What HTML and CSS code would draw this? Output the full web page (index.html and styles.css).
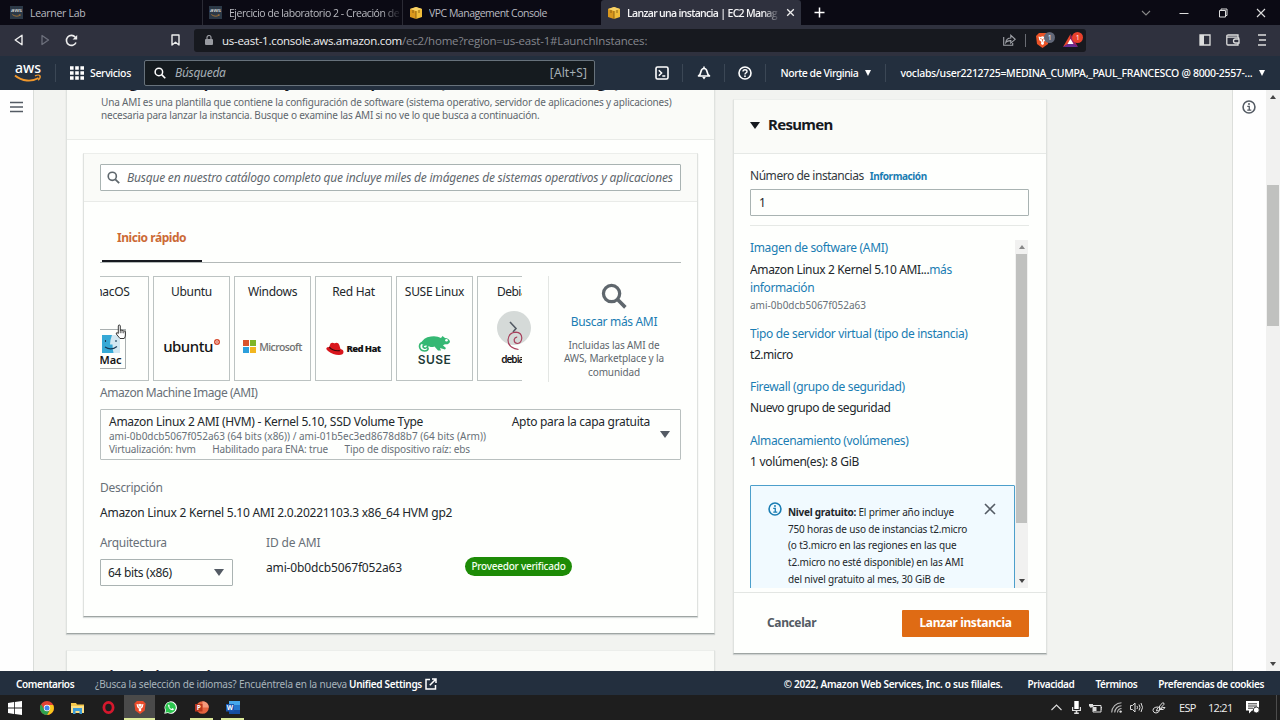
FILE: index.html
```
<!DOCTYPE html>
<html lang="es">
	<head>
		<meta charset="utf-8">
		<title>Lanzar una instancia | EC2 Management Console</title>
		<link rel="stylesheet" href="styles.css">
	</head>

	<body>
		<svg class="defs" width="0" height="0">
			<symbol id="cube" viewBox="0 0 14 14">
				<path d="M1 3 7 1v12l-6-2z" fill="#d9971d"/>
				<path d="M7 1l6 2v8l-6 2z" fill="#f0bd3a"/>
				<path d="M1 3l6-2 6 2-6 2z" fill="#f7d267"/>
				<path d="M7 5v8M4 4v3M10 4v3" stroke="#7c5310" stroke-width=".8"/>
			</symbol>
			<symbol id="smile" viewBox="0 0 28 9">
				<path d="M1 1.500c7 6 17 6.500 23.500 2.500" fill="none" stroke="#f0982c" stroke-width="1.800"/>
				<path d="M21 1.800c2-.9 4.500-.9 5 0 .4.900-.3 3-1.800 4.400" fill="none" stroke="#f0982c" stroke-width="1.400"/>
			</symbol>
			<symbol id="search" viewBox="0 0 16 16">
				<circle cx="6.500" cy="6.500" r="5" fill="none" stroke="currentColor" stroke-width="2"/>
				<path d="M10.200 10.200 15 15" stroke="currentColor" stroke-width="2.200"/>
			</symbol>
			<symbol id="info" viewBox="0 0 16 16">
				<circle cx="8" cy="8" r="6.800" fill="none" stroke="currentColor" stroke-width="1.800"/>
				<path d="M6 7.300h2.300v4M6 11.600h4.600" fill="none" stroke="currentColor" stroke-width="1.500"/>
				<circle cx="8" cy="4.600" r="1.100" fill="currentColor"/>
			</symbol>
		</svg>

		<div class="tabs">
			<div class="tab"><span class="fav"><i>aws</i><svg width="9" height="3"><use href="#smile"/></svg></span><span class="tab-text">Learner Lab</span></div>
			<div class="tab"><span class="fav"><i>aws</i><svg width="9" height="3"><use href="#smile"/></svg></span><span class="tab-text">Ejercicio de laboratorio 2 - Creación de</span></div>
			<div class="tab"><svg class="fav-cube" width="14" height="14"><use href="#cube"/></svg><span class="tab-text">VPC Management Console</span></div>
			<div class="tab on"><svg class="fav-cube" width="14" height="14"><use href="#cube"/></svg><span class="tab-text">Lanzar una instancia | EC2 Manag</span>
				<svg class="tab-close" width="9" height="9" viewBox="0 0 9 9"><path d="M1.200 1.200l6.600 6.600M7.800 1.200 1.200 7.800" stroke="#eee" stroke-width="1.300"/></svg>
			</div>
			<svg class="tab-new" width="11" height="11" viewBox="0 0 11 11"><path d="M5.500 .5v10M.5 5.500h10" stroke="#fff" stroke-width="1.500"/></svg>
			<div class="win">
				<svg width="10" height="10" viewBox="0 0 10 10"><path d="M1 3l4 4 4-4" fill="none" stroke="#888" stroke-width="1.100"/></svg>
				<svg width="10" height="10" viewBox="0 0 10 10"><path d="M.5 5.500h9" stroke="#ddd"/></svg>
				<svg width="10" height="10" viewBox="0 0 10 10"><path d="M1.500 2.500h6v6.500h-6zM3 2.500v-1.500h6v6.500H7.500" fill="none" stroke="#ddd"/></svg>
				<svg width="10" height="10" viewBox="0 0 10 10"><path d="M1 1l8 8M9 1 1 9" stroke="#ddd" stroke-width="1.100"/></svg>
			</div>
		</div>

		<div class="toolbar">
			<div class="nav-btns">
				<svg width="12" height="12" viewBox="0 0 12 12"><path d="M9 1.200v9.600L2.200 6z" fill="none" stroke="#eee" stroke-width="1.400" stroke-linejoin="round"/></svg>
				<svg width="12" height="12" viewBox="0 0 12 12"><path d="M3 1.500v9L9.500 6z" fill="none" stroke="#6c6f7b" stroke-width="1.300" stroke-linejoin="round"/></svg>
				<svg width="13" height="13" viewBox="0 0 13 13"><path d="M11 8.500A5 5 0 1 1 10.300 3.200" fill="none" stroke="#eee" stroke-width="1.600"/><path d="M12.200 1v4.600H7.600z" fill="#eee"/></svg>
			</div>
			<svg class="bookmark" width="9" height="12" viewBox="0 0 9 12"><path d="M1 1h7v10L4.500 8.200 1 11z" fill="none" stroke="#eee" stroke-width="1.400" stroke-linejoin="round"/></svg>
			<div class="url">
				<svg width="8" height="10" viewBox="0 0 8 10"><rect y="4" width="8" height="6" rx="1" fill="#999ba1"/><path d="M2 4V2.500a2 2 0 0 1 4 0V4" fill="none" stroke="#999ba1" stroke-width="1.200"/></svg>
				<span class="host">us-east-1.console.aws.amazon.com</span><span class="path">/ec2/home?region=us-east-1#LaunchInstances:</span>
				<svg class="share" width="13" height="12" viewBox="0 0 13 12"><path d="M.7 3v8.300h9V9" fill="none" stroke="#a0a2a8" stroke-width="1.100"/><path d="M2.800 8.500C3.200 5.500 5 4 7.800 4V1.300l4.400 4-4.400 3.800V6.600C5.500 6.500 4 7 2.800 8.500z" fill="none" stroke="#a0a2a8" stroke-width="1.100"/></svg>
				<span class="url-sep"></span>
				<span class="shield">
					<svg width="13" height="15" viewBox="0 0 13 15"><path d="M3 0h7l3 3-1 8-5.500 4L1 11 0 3z" fill="#ea5327"/><path d="M2.500 3.500l2 .5 2-.7 2 .7 2-.5-.8 3.800-2 1.500L8 11l-1.500 1L5 11l.3-2.200-2-1.500z" fill="#fff"/><path d="M4.200 5.500l1.500.5M8.800 5.500 7.300 6M6.500 6v2.500" stroke="#ea5327" stroke-width=".8"/></svg>
					<b class="dot gray">1</b>
				</span>
				<span class="bat">
					<svg width="15" height="13" viewBox="0 0 15 13"><path d="M7.500 0 0 13l7.500-4z" fill="#e8462d"/><path d="M7.500 0 15 13 7.500 9z" fill="#9e1f63"/><path d="M0 13h15L7.500 8z" fill="#662d91"/><path d="M7.500 4.700l3 5.300h-6z" fill="#fff"/></svg>
					<b class="dot red">1</b>
				</span>
			</div>
			<div class="tools">
				<svg width="12" height="12" viewBox="0 0 12 12"><path d="M1 1h10v10H1z" fill="none" stroke="#ddd" stroke-width="1.300"/><path d="M1 1h4v10H1z" fill="#ddd"/></svg>
				<svg width="14" height="12" viewBox="0 0 14 12"><path d="M12 3.500V1H2.200Q.8 1 .8 2.200v7.600Q.8 11 2 11h10V9M.8 3.200h10.700q1.500.3 1.500 2V9H9.500a2 2 0 0 1 0-4H13" fill="none" stroke="#ddd" stroke-width="1.300"/></svg>
				<svg width="8" height="12" viewBox="0 0 8 12"><path d="M0 1h8M1 6h7M0 11h8" stroke="#ddd" stroke-width="1.300"/></svg>
			</div>
		</div>

		<div class="awsnav">
			<div class="logo"><i>aws</i><svg width="28" height="9"><use href="#smile"/></svg></div>
			<span class="sep"></span>
			<div class="services">
				<svg width="14" height="14" viewBox="0 0 14 14"><path d="M0 2h14M0 7h14M0 12h14" stroke="#fff" stroke-width="3.600" stroke-dasharray="3.600 1.600"/></svg>
				<span>Servicios</span>
			</div>
			<div class="find">
				<svg width="12" height="12"><use href="#search"/></svg>
				<em>Búsqueda</em>
				<span>[Alt+S]</span>
			</div>
			<div class="nav-icons">
				<svg width="14" height="14" viewBox="0 0 14 14"><rect x="1" y="1" width="12" height="12" rx="1.500" fill="none" stroke="#fff" stroke-width="1.600"/><path d="M3.800 4.200 6.600 7 3.800 9.800M7.300 10h3" fill="none" stroke="#fff" stroke-width="1.500"/></svg>
				<span class="sep"></span>
				<svg width="14" height="14" viewBox="0 0 14 14"><path d="M7 .5v2M1.500 10Q3.500 8.500 4 5.500q.6-3 3-3t3 3q.5 3 2.500 4.500z" fill="none" stroke="#fff" stroke-width="1.600" stroke-linejoin="round"/><path d="M5.200 11h3.600L7 13.600z" fill="#fff"/></svg>
				<span class="sep"></span>
				<svg width="14" height="14" viewBox="0 0 14 14"><circle cx="7" cy="7" r="6" fill="none" stroke="#fff" stroke-width="1.600"/><path d="M5 5.600q0-1.900 2-1.900t2 1.700q0 1-1 1.500t-1 1.500" fill="none" stroke="#fff" stroke-width="1.400"/><circle cx="7" cy="10.200" r=".9" fill="#fff"/></svg>
				<span class="sep"></span>
			</div>
			<div class="menu region">Norte de Virginia<i class="tri"></i></div>
			<span class="sep"></span>
			<div class="menu user">voclabs/user2212725=MEDINA_CUMPA,_PAUL_FRANCESCO @ 8000-2557-...<i class="tri"></i></div>
		</div>

		<div class="page">
			<div class="side-left">
				<svg width="13" height="12" viewBox="0 0 13 12"><path d="M0 1.500h13M0 6h13M0 10.500h13" stroke="#545b64" stroke-width="1.500"/></svg>
			</div>

			<div class="content">
				<div class="main-col">
					<div class="card ami">
						<div class="card-head">
							<h2>Imágenes de aplicaciones y sistemas operativos (Amazon Machine Image)</h2>
							<p>Una AMI es una plantilla que contiene la configuración de software (sistema operativo, servidor de aplicaciones y aplicaciones)</p>
							<p class="second">necesaria para lanzar la instancia. Busque o examine las AMI si no ve lo que busca a continuación.</p>
						</div>

						<div class="card inner">
							<div class="inner-head">
								<div class="catalog">
									<svg width="13" height="13"><use href="#search"/></svg>
									<em>Busque en nuestro catálogo completo que incluye miles de imágenes de sistemas operativos y aplicaciones</em>
								</div>
							</div>
							<div class="inner-body">
								<div class="quick"><span>Inicio rápido</span></div>

								<div class="os-row">
									<div class="os-clip">
										<div class="os-list">
											<div class="os">
												<span>macOS</span>
												<div class="brand mac">
													<svg width="18" height="18" viewBox="0 0 18 18"><path d="M0 0h18v18H0z" fill="#d3e8f2"/><path d="M0 0h10Q8 5 8 9.500h2.500q0 5 1 8.500H0z" fill="#36a9d6"/><path d="M3.500 5v2M14 5v2M3 12q6 4 12-.5" fill="none" stroke="#173a57" stroke-width="1.100"/></svg>
													<b>Mac</b>
												</div>
											</div>
											<div class="os">
												<span>Ubuntu</span>
												<div class="brand ubuntu">ubuntu<svg width="6" height="6" viewBox="0 0 6 6"><circle cx="3" cy="3" r="3" fill="#d6492c"/><circle cx="3" cy="3" r="1.300" fill="none" stroke="#fff" stroke-width=".7"/></svg></div>
											</div>
											<div class="os">
												<span>Windows</span>
												<div class="brand ms"><svg width="13" height="13" viewBox="0 0 13 13"><path d="M0 0h6v6H0z" fill="#d9532c"/><path d="M7 0h6v6H7z" fill="#7fb526"/><path d="M0 7h6v6H0z" fill="#2b9fdc"/><path d="M7 7h6v6H7z" fill="#f2b61f"/></svg>Microsoft</div>
											</div>
											<div class="os">
												<span>Red Hat</span>
												<div class="brand redhat"><svg width="18" height="13" viewBox="0 0 18 13"><path d="M4.500 1.500Q6 .2 7.500 1q1.500.5 3-.2 2 0 2.800 2.200L14.500 7q3 .7 3 3 0 3-4.500 3-6 0-11-4Q0 7.500.3 6.200.8 5 3.200 5z" fill="#d9161c"/><path d="M3.300 5.200Q7 9.500 13.800 8.600" fill="none" stroke="#3a0b0c" stroke-width="1.200"/></svg>Red Hat</div>
											</div>
											<div class="os">
												<span>SUSE Linux</span>
												<div class="brand suse">
													<svg width="33" height="17" viewBox="0 0 33 17"><path d="M3 9Q5 2 13 1.500q6-.8 10 1.500l1.500-2L27 3q4 .3 5 3.500-.5 3-4.500 2.800-1.500 0-2.500 1.200l3 2.500-1 1.500-5-1.500 1 2.500h-3l-3.500-4q-3 1-5 0L10 11z" fill="#35b873"/><path d="M10 12.500Q10.500 16 6.500 16 1.500 15.500 1.500 11q.5-3.800 5-3.800Q10 7.500 9.800 11q-.8 2.600-3.200 2.200Q4.500 12.500 5.300 10.500 6.300 9.400 7.400 10.500" fill="none" stroke="#35b873" stroke-width="1.700"/><circle cx="28.500" cy="5.300" r="1.300" fill="#fff"/></svg>
													<b>SUSE</b>
												</div>
											</div>
											<div class="os">
												<span class="debian-name">Debian</span>
												<div class="brand debian"><b>debian</b></div>
											</div>
										</div>
									</div>
									<div class="next">
										<svg width="34" height="42" viewBox="0 0 34 42"><circle cx="17" cy="17" r="17" fill="#d5dad8"/><path d="M13 11l6 6.500-3 3.500" fill="none" stroke="#545b64" stroke-width="1.600"/><path d="M21.500 38.500Q11 37 11 29q.5-7.500 8-7.800 5.500.3 5.800 5.800-.3 5-4.300 5.500-3.500-.3-3.300-4 .8-2.500 3-2.300" fill="none" stroke="#a8405c" stroke-width="1.200"/></svg>
									</div>
									<div class="more">
										<svg width="26" height="26"><use href="#search"/></svg>
										<a>Buscar más AMI</a>
										<p>Incluidas las AMI de<br>AWS, Marketplace y la<br>comunidad</p>
									</div>
									<svg class="hand" width="12" height="17" viewBox="0 0 12 17"><path d="M3.300 9.500V2q0-1 1-1t1 1v4.500q.8-.8 1.700 0 1-.5 1.700.4 1.500-.3 1.700 1V11q0 2-1.200 3.500H5L1.300 10q-.3-1.300.7-1.500z" fill="#fff" stroke="#222" stroke-width=".9"/><path d="M5.300 6.500v2.700M7 6.800v2.400M8.700 7.300v2" stroke="#222" stroke-width=".7"/></svg>
								</div>

								<label class="ami-label">Amazon Machine Image (AMI)</label>
								<div class="ami-select">
									<div class="ami-name"><span>Amazon Linux 2 AMI (HVM) - Kernel 5.10, SSD Volume Type</span><span class="free">Apto para la capa gratuita</span></div>
									<div class="ami-id">ami-0b0dcb5067f052a63 (64 bits (x86)) / ami-01b5ec3ed8678d8b7 (64 bits (Arm))</div>
									<div class="ami-meta"><span>Virtualización: hvm</span><span>Habilitado para ENA: true</span><span>Tipo de dispositivo raíz: ebs</span></div>
									<i class="tri"></i>
								</div>

								<label class="desc-label">Descripción</label>
								<div class="desc">Amazon Linux 2 Kernel 5.10 AMI 2.0.20221103.3 x86_64 HVM gp2</div>

								<div class="facts">
									<div class="arch">
										<label>Arquitectura</label>
										<div class="arch-select">64 bits (x86)<i class="tri"></i></div>
									</div>
									<div class="idami">
										<label>ID de AMI</label>
										<div>ami-0b0dcb5067f052a63</div>
									</div>
									<span class="badge">Proveedor verificado</span>
								</div>
							</div>
						</div>
					</div>

					<div class="card type"><h2>Tipo de instancia</h2></div>
				</div>

				<div class="card summary">
					<div class="sum-head"><i class="tri"></i><h2>Resumen</h2></div>
					<div class="sum-body">
						<div class="count"><label>Número de instancias</label><a>Información</a></div>
						<div class="count-input">1</div>
						<div class="scroll">
							<div class="items">
								<a>Imagen de software (AMI)</a>
								<p class="image">Amazon Linux 2 Kernel 5.10 AMI...<a>más<br>información</a></p>
								<small>ami-0b0dcb5067f052a63</small>
								<a>Tipo de servidor virtual (tipo de instancia)</a>
								<p>t2.micro</p>
								<a>Firewall (grupo de seguridad)</a>
								<p>Nuevo grupo de seguridad</p>
								<a>Almacenamiento (volúmenes)</a>
								<p class="last">1 volúmen(es): 8 GiB</p>
								<div class="notice">
									<svg class="notice-info" width="14" height="14"><use href="#info"/></svg>
									<div><b>Nivel gratuito:</b> El primer año incluye<br>750 horas de uso de instancias t2.micro<br>(o t3.micro en las regiones en las que<br>t2.micro no esté disponible) en las AMI<br>del nivel gratuito al mes, 30 GiB de</div>
									<svg class="notice-x" width="12" height="12" viewBox="0 0 12 12"><path d="M1 1l10 10M11 1 1 11" stroke="#545b64" stroke-width="1.600"/></svg>
								</div>
							</div>
							<div class="bar"><i class="up"></i><span></span><i class="down"></i></div>
						</div>
					</div>
					<div class="sum-foot"><b>Cancelar</b><button>Lanzar instancia</button></div>
				</div>
			</div>

			<div class="side-right"><svg width="14" height="14"><use href="#info"/></svg></div>
			<div class="page-bar"><i class="up"></i><span></span><i class="down"></i></div>
		</div>

		<div class="footer">
			<b>Comentarios</b>
			<span class="lang">¿Busca la selección de idiomas? Encuéntrela en la nueva</span>
			<b class="unified">Unified Settings</b>
			<svg width="12" height="12" viewBox="0 0 12 12"><path d="M5 1.500H1v9.500h9.500V7M7 1h4v4M11 1 4.800 7.200" fill="none" stroke="#fff" stroke-width="1.500"/></svg>
			<b class="copy">© 2022, Amazon Web Services, Inc. o sus filiales.</b>
			<b class="priv">Privacidad</b>
			<b class="terms">Términos</b>
			<b class="cook">Preferencias de cookies</b>
		</div>

		<div class="taskbar">
			<div class="app start"><svg width="14" height="14" viewBox="0 0 14 14"><path d="M0 2l6-.9v5.500H0zM6.800 1 14 0v6.600H6.800zM0 7.400h6v5.500L0 12zM6.800 7.400H14V14l-7.200-1z" fill="#fff"/></svg></div>
			<div class="app"><svg width="14" height="14" viewBox="0 0 14 14"><circle cx="7" cy="7" r="7" fill="#e04335"/><path d="M1 3.500 5 10l-.5 3.500A7 7 0 0 1 1 3.500z" fill="#2fa24f"/><path d="M7 14A7 7 0 0 0 13.200 4H8l2 4.500z" fill="#f8c81c"/><path d="M1 3.500 4.500 9q2 2 5 .5L7 14A7 7 0 0 1 1 3.500z" fill="#2fa24f"/><circle cx="7" cy="7" r="3.200" fill="#fff"/><circle cx="7" cy="7" r="2.500" fill="#4285f0"/></svg></div>
			<div class="app"><svg width="13" height="12" viewBox="0 0 13 12"><path d="M0 1h5l1 1.500h7V11H0z" fill="#f5c84c"/><path d="M0 4h13v7H0z" fill="#fbdf86"/><path d="M2 6h9v6H8.500V9h-4v3H2z" fill="#3c9bd6"/></svg></div>
			<div class="app"><svg width="13" height="13" viewBox="0 0 13 13"><ellipse cx="6.500" cy="6.500" rx="4.600" ry="5.100" fill="none" stroke="#d5182d" stroke-width="2.800"/></svg></div>
			<div class="app on"><svg width="12" height="13" viewBox="0 0 13 15"><path d="M3 0h7l3 3-1 8-5.500 4L1 11 0 3z" fill="#ea4b2b"/><path d="M2.500 3.500l2 .5 2-.7 2 .7 2-.5-.8 3.800-2 1.500L8 11l-1.500 1L5 11l.3-2.200-2-1.500z" fill="#fff"/><path d="M4.200 5.500l1.500.5M8.800 5.500 7.300 6M6.500 6v2.500" stroke="#ea5327" stroke-width=".8"/></svg></div>
			<div class="app"><svg width="13" height="13" viewBox="0 0 13 13"><path d="M.3 12.700 1.200 9.300A6.200 6.200 0 1 1 3.800 12z" fill="#fff"/><path d="M1.300 11.700 2 9.300A5.300 5.300 0 1 1 4 11.200z" fill="#2cc64f"/><path d="M4 4q.8-1 1.300 0l.4 1q0 .5-.5.900.9 1.500 2.400 2l.8-.8 1.500.8q0 1.300-1.600 1.400Q4.500 8.600 4 4z" fill="#fff"/></svg></div>
			<div class="app run"><svg width="14" height="13" viewBox="0 0 14 13"><circle cx="7.500" cy="6.500" r="6.300" fill="#e4643f"/><path d="M7.500.2a6.300 6.300 0 0 1 6.300 6.300H7.500z" fill="#f39a7c"/><rect y="3" width="7.500" height="7.500" fill="#b7371d"/><text x="1.800" y="9.200" class="letter">P</text></svg></div>
			<div class="app run"><svg width="14" height="13" viewBox="0 0 14 13"><rect x="3" width="11" height="4" fill="#45a6ea"/><rect x="3" y="4" width="11" height="5" fill="#2577cd"/><rect x="3" y="9" width="11" height="4" fill="#154d9f"/><rect y="3" width="8" height="7.500" fill="#1a56b0"/><text x=".8" y="9.200" class="letter">W</text></svg></div>

			<div class="tray">
				<svg class="caret" width="11" height="7" viewBox="0 0 11 7"><path d="M.5 6l5-5 5 5" fill="none" stroke="#ddd" stroke-width="1.100"/></svg>
				<svg class="mic" width="9" height="13" viewBox="0 0 9 13"><path d="M2.300 0h4.400v8H2.300z" fill="#fff"/><path d="M0 6h1.200v3h6.600V6H9v4H5.300v1.500h1.500V13H2.200v-1.500h1.500V10H0z" fill="#ddd"/></svg>
				<svg class="power" width="13" height="10" viewBox="0 0 13 10"><path d="M4 2.500h8V9H4zM12 4.500h1v2.500" fill="none" stroke="#ddd"/><path d="M4 4h3.500v4H4zM0 1h4v3H2.800L2 5.200 1 4 0 3z" fill="#ddd"/></svg>
				<svg width="11" height="11" viewBox="0 0 11 11"><path d="M.7 10.500A10 10 0 0 1 10.500.7M3.700 10.500a7 7 0 0 1 6.800-6.800M6.500 10.500a4 4 0 0 1 4-4" fill="none" stroke="#bbb" stroke-width="1.100"/><circle cx="9.600" cy="9.600" r="1.200" fill="#ddd"/></svg>
				<svg width="14" height="11" viewBox="0 0 14 11"><path d="M.5 3.500h2L5 1v9L2.500 7.500h-2zM7 4q1 1.500 0 3M9 2.500q2 3 0 6M11 1q3 4.500 0 9" fill="none" stroke="#ddd"/></svg>
				<svg width="14" height="12" viewBox="0 0 14 12"><path d="M5 7 10.500.8q1.800-.3 1.500 1.500L6.500 8.500l-2 .5zM6 5q-5 0-5 3.500Q1.500 11 4 11t3.500-2.500V4M8 7.500q3-3 5-2-1 3-5 2" fill="none" stroke="#ddd"/></svg>
				<span class="esp">ESP</span>
				<span class="clock">12:21</span>
				<svg width="14" height="13" viewBox="0 0 14 13"><path d="M0 0h13v9.500H6L3 12.500V9.500H0z" fill="#fff"/><path d="M2 2.800h9M2 5h9M2 7.200h5" stroke="#1e1e1e" stroke-width=".9"/><circle cx="10.300" cy="9" r="3" fill="#fff" stroke="#1e1e1e" stroke-width=".9"/></svg>
				<span class="desk"></span>
			</div>
		</div>
	</body>
</html>
```
FILE: styles.css
```
* {
	margin: 0;
	padding: 0;
	box-sizing: border-box;
}
body {
	width: 1280px;
	height: 720px;
	overflow: hidden;
	display: flex;
	flex-direction: column;
	font-family: "Noto Sans", "Open Sans", sans-serif;
	font-size: 12px;
	line-height: 16px;
	letter-spacing: -0.3px;
	color: #22272b;
	background: #f2f3f0;
	white-space: nowrap;
}
svg {
	display: block;
	flex: none;
}
.defs {
	position: absolute;
}
a {
	color: #1a7db3;
}
i {
	font-style: normal;
}
.tri {
	display: block;
	width: 0;
	height: 0;
	border: 3.5px solid transparent;
	border-top: 6px solid #fff;
	border-bottom: 0;
}

/* browser tabs */
.tabs {
	height: 25px;
	flex: none;
	display: flex;
	align-items: center;
	background: #0b0a14;
	font: 10.5px "Open Sans", sans-serif;
	letter-spacing: -0.2px;
	color: #b9bac0;
}
.tab {
	height: 25px;
	width: 200px;
	padding-left: 6px;
	display: flex;
	align-items: center;
	border-right: 1px solid #2b2b35;
	letter-spacing: -0.46px;
}
.tab:first-child {
	width: 203px;
	padding-left: 10px;
	letter-spacing: -0.3px;
}
.tab:nth-child(3) {
	width: 198px;
	border: 0;
	letter-spacing: -0.5px;
}
.tab.on {
	background: #2f313e;
	color: #f4f4f6;
	font-weight: 600;
	border: 0;
	border-radius: 3px 3px 0 0;
	letter-spacing: -0.68px;
}
.fav {
	width: 13px;
	height: 13px;
	background: #2c3947;
	display: flex;
	flex-direction: column;
	align-items: center;
	font-size: 6px;
	line-height: 7px;
	letter-spacing: 0;
	color: #fff;
	padding-top: 1px;
}
.tab-text {
	margin-left: 6px;
	width: 171px;
	overflow: hidden;
}
.fav + .tab-text {
	margin-left: 7px;
}
.tab:nth-child(2) .tab-text,
.tab.on .tab-text {
	-webkit-mask-image: linear-gradient(90deg, #000 89%, transparent 101%);
	mask-image: linear-gradient(90deg, #000 89%, transparent 101%);
}
.tab.on .tab-text {
	width: 152px;
}
.tab-close {
	margin-left: 7px;
}
.tab-new {
	margin-left: 13px;
}
.win {
	margin-left: auto;
	margin-right: 14px;
	display: flex;
	gap: 28.4px;
}

/* address bar */
.toolbar {
	height: 31px;
	flex: none;
	display: flex;
	align-items: center;
	background: #2f313e;
	padding-bottom: 1px;
}
.nav-btns {
	margin-left: 13px;
	width: 65px;
	display: flex;
	justify-content: space-between;
}
.bookmark {
	margin-left: 93px;
}
.url {
	margin-left: 14px;
	width: 892px;
	height: 23px;
	border-radius: 3px;
	background: #17191f;
	display: flex;
	align-items: center;
	padding-left: 11px;
	font: 11.5px "Open Sans", sans-serif;
}
.host {
	color: #eeeff0;
	margin-left: 9px;
	letter-spacing: -0.28px;
}
.path {
	color: #85878e;
	letter-spacing: -0.18px;
}
.share {
	margin-left: auto;
}
.url-sep {
	width: 1px;
	height: 13px;
	margin: 0 10px 0 9px;
	background: #6a6c73;
}
.shield,
.bat {
	position: relative;
}
.bat {
	margin: 0 8px 0 14px;
}
.dot {
	position: absolute;
	top: -1px;
	left: 8px;
	width: 11px;
	height: 11px;
	border-radius: 50%;
	font-size: 7px;
	line-height: 11px;
	text-align: center;
	color: #fff;
	font-weight: 400;
}
.gray {
	background: #626878;
}
.red {
	background: #e8412c;
	top: -2px;
	left: 9px;
}
.tools {
	margin-left: 113px;
	display: flex;
	gap: 15px;
}
.tools svg:last-child {
	margin-left: 3px;
}

/* aws navigation */
.awsnav {
	height: 34px;
	flex: none;
	display: flex;
	align-items: center;
	background: #232f3e;
	color: #fff;
	font-size: 10.5px;
	font-weight: 500;
}
.logo {
	width: 28px;
	margin-left: 14px;
	text-align: center;
	font-size: 14px;
	font-weight: 500;
	line-height: 13px;
	letter-spacing: -0.1px;
	padding-bottom: 2px;
}
.logo i {
	display: block;
}
.sep {
	width: 1px;
	height: 18px;
	background: #3b4755;
	flex: none;
}
.logo + .sep {
	margin-left: 13px;
}
.services {
	margin-left: 14px;
	display: flex;
	align-items: center;
	gap: 6px;
	width: 74px;
	letter-spacing: -0.36px;
}
.find {
	width: 451px;
	height: 26px;
	border: 1px solid #67727b;
	border-radius: 2px;
	background: #151b1f;
	display: flex;
	align-items: center;
	padding: 0 7px 0 9px;
	font-size: 12px;
	font-weight: 400;
	color: #a5afb5;
}
.find svg {
	color: #fff;
}
.find em {
	margin-left: 9px;
}
.find span {
	margin-left: auto;
	letter-spacing: 0.1px;
}
.nav-icons {
	margin-left: 60px;
	display: flex;
	align-items: center;
	gap: 13.3px;
}
.menu {
	display: flex;
	align-items: center;
	justify-content: space-between;
}
.region {
	margin-left: 14px;
	margin-right: 14px;
	width: 91px;
	letter-spacing: -0.45px;
}
.user {
	margin-left: 14px;
	width: 365px;
	letter-spacing: -0.31px;
}

/* page */
.page {
	height: 581px;
	flex: none;
	overflow: hidden;
	display: flex;
}
.side-left {
	width: 34px;
	background: #fefefe;
	border-right: 1px solid #d9dcd9;
	padding: 11px 0 0 10px;
}
.content {
	flex: 1;
	display: flex;
	align-items: flex-start;
	padding-left: 32px;
	gap: 18px;
}
.main-col {
	width: 649px;
	margin-top: -24px;
}
.card {
	background: #fefffd;
	border: 1px solid #dfe2df;
	border-top-color: #eceeeb;
	border-bottom-color: #9fa5a3;
	box-shadow: 0 1px 1px rgba(0, 28, 36, 0.15);
}
.ami {
	height: 568px;
}
.card-head {
	height: 73px;
	padding: 5px 0 0 34px;
	background: #fafbf8;
	border-bottom: 1px solid #e9ebe8;
}
h2 {
	font-size: 15px;
	line-height: 20px;
	font-weight: 700;
	letter-spacing: -0.5px;
	color: #16191f;
}
.card-head p {
	margin-top: 4px;
	font-size: 10px;
	line-height: 13px;
	letter-spacing: -0.17px;
	color: #5f676d;
}
.card-head .second {
	margin-top: 0;
	letter-spacing: -0.21px;
}
.inner {
	margin: 13px 16px 0 16px;
	height: 464px;
}
.inner-head {
	height: 48px;
	padding: 10px 16px 0;
	background: #fafbf8;
	border-bottom: 1px solid #e9ebe8;
}
.catalog {
	height: 27px;
	border: 1px solid #a9b3b2;
	border-radius: 1px;
	background: #fff;
	display: flex;
	align-items: center;
	padding-left: 6px;
	color: #5f676d;
}
.catalog em {
	margin-left: 7px;
	letter-spacing: -0.21px;
}
.inner-body {
	padding: 0 16px;
}
.quick {
	height: 61px;
	border-bottom: 1px solid #b3b9b8;
	padding-left: 2px;
}
.quick span {
	display: block;
	width: 100px;
	height: 60px;
	padding: 28px 0 0 15px;
	border-bottom: 2px solid #16191f;
	color: #cc6a36;
	font-weight: 700;
	letter-spacing: -0.46px;
}
.os-row {
	position: relative;
	margin-top: 13px;
	height: 106px;
	display: flex;
}
.os-clip {
	width: 422px;
	overflow: hidden;
}
.os-list {
	display: flex;
	gap: 4px;
	margin-left: -28px;
}
.os {
	width: 77px;
	height: 105px;
	flex: none;
	border: 1px solid #bcc3c2;
	padding-top: 7px;
	display: flex;
	flex-direction: column;
	align-items: center;
}
.debian-name {
	letter-spacing: -0.5px;
}
.brand {
	margin-top: 25px;
	height: 46px;
	display: flex;
	align-items: center;
	justify-content: center;
	color: #151515;
}
.mac {
	width: 31px;
	height: 40px;
	margin-top: 29px;
	border: 1px solid #aab0b0;
	flex-direction: column;
	font-size: 11px;
	line-height: 14px;
	letter-spacing: -0.1px;
	padding-top: 3px;
}
.mac b {
	font-weight: 600;
}
.ubuntu {
	font-size: 15px;
	letter-spacing: -0.5px;
	font-weight: 500;
	padding-bottom: 4px;
}
.ubuntu svg {
	margin: -8px 0 0 1px;
}
.ms {
	font: 600 10.5px "Open Sans", sans-serif;
	letter-spacing: -0.65px;
	gap: 3px;
	color: #737373;
	padding-bottom: 3px;
}
.redhat {
	font: 800 9.5px "Open Sans", sans-serif;
	letter-spacing: -0.6px;
	gap: 2px;
}
.suse {
	flex-direction: column;
	font: 600 12px "Inter", sans-serif;
	letter-spacing: 0.4px;
	color: #1d3a36;
	padding-top: 6px;
}
.suse b {
	font-weight: 600;
	line-height: 14px;
	margin-top: 1px;
}
.debian {
	align-items: flex-end;
	font-size: 10px;
	letter-spacing: -0.95px;
	line-height: 12px;
	padding-right: 1px;
}
.debian b {
	font-weight: 600;
	margin-bottom: 6px;
}
.next {
	position: absolute;
	left: 397px;
	top: 35px;
}
.hand {
	position: absolute;
	left: 15px;
	top: 48px;
}
.more {
	margin-left: 26px;
	flex: 1;
	border-left: 1px solid #e3e6e3;
	display: flex;
	flex-direction: column;
	align-items: center;
	padding: 7px 2px 0 0;
	color: #5f676d;
}
.more a {
	margin-top: 5px;
	letter-spacing: -0.33px;
}
.more p {
	margin-top: 9px;
	font-size: 10px;
	line-height: 13.3px;
	text-align: center;
	letter-spacing: -0.13px;
}
label {
	display: block;
	color: #687078;
}
.ami-label {
	margin-top: 3px;
	letter-spacing: -0.46px;
}
.ami-select {
	position: relative;
	margin-top: 8px;
	height: 51px;
	border: 1px solid #b9c0bf;
	border-radius: 1px;
	padding: 4px 30px 0 8px;
	font-size: 10px;
	line-height: 13px;
	letter-spacing: -0.13px;
	color: #687078;
}
.ami-name {
	display: flex;
	justify-content: space-between;
	font-size: 12px;
	line-height: 16px;
	letter-spacing: -0.29px;
	color: #22272b;
}
.ami-id {
	letter-spacing: 0;
}
.ami-meta {
	display: flex;
	gap: 16.5px;
}
.ami-select .tri,
.arch-select .tri,
.sum-head .tri {
	border-width: 7px 5px 0;
	border-top-color: #545b64;
}
.ami-select .tri {
	position: absolute;
	right: 10px;
	top: 21px;
}
.desc-label {
	margin-top: 20px;
}
.desc {
	margin-top: 9px;
	letter-spacing: -0.25px;
}
.facts {
	margin-top: 14px;
	display: flex;
}
.arch {
	width: 133px;
}
.arch-select {
	margin-top: 8px;
	height: 27px;
	border: 1px solid #aab3b2;
	border-radius: 1px;
	display: flex;
	align-items: center;
	justify-content: space-between;
	padding: 0 8px 0 7px;
}
.idami {
	margin-left: 33px;
	width: 199px;
	letter-spacing: -0.15px;
}
.idami div {
	margin-top: 9px;
}
.badge {
	margin-top: 22px;
	width: 107px;
	height: 19px;
	border-radius: 10px;
	background: #1d8b06;
	color: #f4fff0;
	font-size: 10px;
	font-weight: 500;
	line-height: 19px;
	text-align: center;
	letter-spacing: -0.25px;
}
.type {
	margin-top: 16px;
	height: 100px;
	background: #fafbf8;
	padding: 14px 34px;
}

/* summary */
.summary {
	width: 314px;
	height: 555px;
	margin-top: 9px;
}
.sum-head {
	height: 54px;
	background: #fafbf8;
	border-bottom: 1px solid #e6e9e6;
	display: flex;
	align-items: center;
	padding: 0 0 2px 16px;
}
.sum-head .tri {
	border-top-color: #16191f;
}
.sum-head h2 {
	margin: -3px 0 0 8px;
	letter-spacing: -0.7px;
}
.sum-body {
	padding: 14px 17px 0 16px;
	height: 438px;
}
.count {
	display: flex;
	align-items: center;
	gap: 6px;
}
.count label {
	color: #33393e;
	letter-spacing: -0.46px;
}
.count a {
	font-size: 10px;
	font-weight: 700;
	letter-spacing: -0.42px;
}
.count-input {
	margin-top: 5px;
	height: 27px;
	border: 1px solid #a9b3b2;
	border-radius: 1px;
	line-height: 25px;
	padding-left: 8px;
}
.scroll {
	margin-top: 9px;
	padding-top: 14px;
	border-top: 1px solid #e6e9e6;
	height: 363px;
	display: flex;
}
.items {
	width: 265px;
	overflow: hidden;
}
.items > a {
	display: block;
	line-height: 16px;
	margin-bottom: 4px;
	letter-spacing: -0.35px;
}
.items p {
	line-height: 17px;
	margin-bottom: 16.3px;
	letter-spacing: -0.45px;
}
.items .image {
	line-height: 18px;
	margin: 5px 0 2px;
	letter-spacing: -0.37px;
}
.items .last {
	margin-bottom: 15.3px;
	letter-spacing: -0.3px;
}
.items small {
	display: block;
	font-size: 10px;
	line-height: 12px;
	letter-spacing: 0;
	color: #687078;
	margin-bottom: 15px;
}
.notice {
	height: 140px;
	border: 1px solid #4c9fcb;
	border-radius: 1px;
	background: #f1faff;
	display: flex;
	align-items: flex-start;
	padding-top: 16px;
	font-size: 10px;
	line-height: 16.7px;
	letter-spacing: -0.16px;
}
.notice div {
	margin: 2px 0 0 6px;
	width: 179px;
}
.notice b {
	letter-spacing: -0.28px;
}
.notice-info {
	margin-left: 17px;
	color: #1a7db3;
}
.notice-x {
	margin: 1px 0 0 17px;
}
.bar,
.page-bar {
	display: flex;
	flex-direction: column;
	align-items: center;
	background: #f1f1f0;
}
.bar {
	width: 13px;
}
.bar span {
	width: 11px;
	height: 269px;
	margin-top: 5px;
	background: #c0c1bf;
}
.up,
.down {
	border: 3px solid transparent;
}
.up {
	border-top: 0;
	border-bottom: 4px solid #888;
	margin-top: 5px;
}
.down {
	border-bottom: 0;
	border-top: 4px solid #444;
	margin: auto 0 5px;
}
.sum-foot {
	height: 61px;
	border-top: 1px solid #e3e6e3;
	display: flex;
	align-items: center;
	justify-content: space-between;
	padding: 0 17px 0 33px;
	color: #545b64;
	letter-spacing: -0.38px;
}
.sum-foot button {
	width: 127px;
	height: 27px;
	border: 0;
	border-radius: 1px;
	background: #df6b14;
	color: #fff;
	font: 700 12px "Noto Sans", sans-serif;
	letter-spacing: -0.37px;
	padding-bottom: 1px;
}
.side-right {
	width: 34px;
	background: #fefefe;
	border-left: 1px solid #dcdedb;
	padding: 10px 0 0 9px;
	color: #545b64;
}
.page-bar {
	width: 14px;
}
.page-bar .up {
	border-bottom-color: #444;
}
.page-bar span {
	width: 12px;
	height: 141px;
	margin-top: 86px;
	background: #c0c1bf;
}

/* console footer */
.footer {
	height: 24px;
	flex: none;
	background: #232f3e;
	color: #fff;
	display: flex;
	align-items: center;
	font-size: 10px;
	letter-spacing: -0.4px;
	padding-top: 2px;
}
.footer b {
	font-weight: 600;
}
.footer > b:first-child {
	margin-left: 16px;
	width: 79px;
}
.lang {
	width: 254px;
	color: #a9b4bb;
	letter-spacing: -0.18px;
}
.unified {
	width: 76px;
	letter-spacing: -0.3px;
}
.footer .copy {
	margin-left: auto;
	letter-spacing: -0.29px;
}
.priv {
	margin-left: 25px;
}
.terms {
	margin-left: 21px;
}
.cook {
	margin: 0 16px 0 21px;
}

/* taskbar */
.taskbar {
	height: 25px;
	flex: none;
	background: #1e1e1e;
	display: flex;
}
.app {
	width: 31px;
	display: flex;
	align-items: center;
	justify-content: center;
}
.app.start {
	padding-right: 2px;
}
.app.on {
	background: #4a4a4a;
	border-bottom: 2px solid #dcea9a;
	padding-top: 2px;
}
.app.run {
	background: linear-gradient(#dcea9a, #dcea9a) center bottom / 23px 2px no-repeat;
}
.letter {
	font: 700 6.5px "Open Sans", sans-serif;
	fill: #fff;
}
.tray {
	margin-left: auto;
	display: flex;
	align-items: center;
	font: 11px "Open Sans", sans-serif;
	letter-spacing: -0.7px;
	color: #eee;
	gap: 8px;
}
.caret {
	margin-right: 2px;
}
.power {
	margin-right: 1px;
}
.esp {
	margin-left: 5px;
	width: 16px;
}
.clock {
	margin-left: 5px;
	width: 24px;
}
.clock + svg {
	margin-left: 6px;
}
.desk {
	width: 1px;
	height: 25px;
	margin: 0 3px 0 8px;
	background: #4c4c4c;
}
```
